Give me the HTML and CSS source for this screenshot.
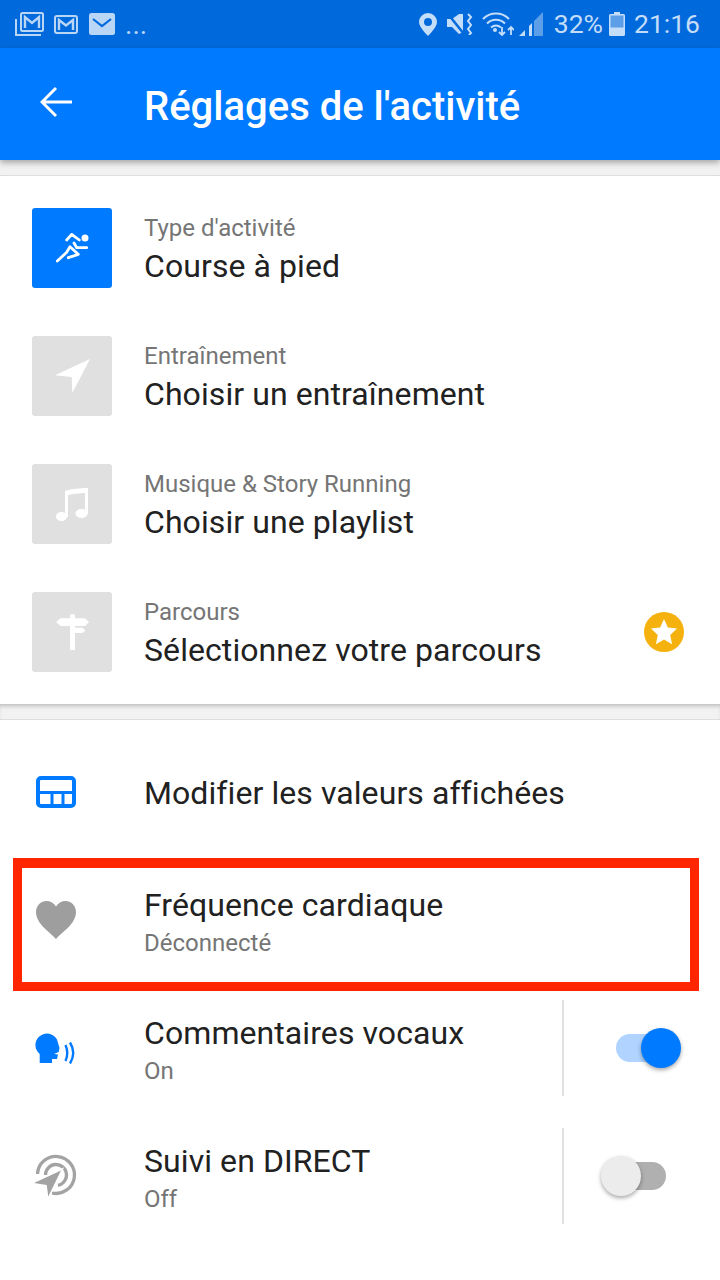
FILE: index.html
```html
<!DOCTYPE html>
<html lang="fr">
<head>
<meta charset="utf-8">
<title>Réglages de l'activité</title>
<link rel="stylesheet" href="styles.css">
</head>
<body>
<div class="status">
  <div class="status-left">
    <svg class="si" width="29" height="24" viewBox="0 0 29 24"><path d="M1 7v16h25" fill="none" stroke="#b9d6f7" stroke-width="2"/><rect x="6" y="1" width="22" height="18" rx="1.500" fill="none" stroke="#b9d6f7" stroke-width="2"/><path d="M10 16V5l7 6 7-6v11" fill="none" stroke="#b9d6f7" stroke-width="2.400"/></svg>
    <svg class="si" width="24" height="19" viewBox="0 0 24 19"><rect x="1" y="1" width="22" height="17" rx="2" fill="none" stroke="#b9d6f7" stroke-width="2"/><path d="M5 15V5l7 5.500L19 5v10" fill="none" stroke="#b9d6f7" stroke-width="2.400"/></svg>
    <svg class="si si3" width="26" height="22" viewBox="0 0 26 22"><rect width="26" height="22" rx="2.500" fill="#b9d6f7"/><path d="M4 6l9 7 9-7" fill="none" stroke="#006adc" stroke-width="2.200"/></svg>
    <span class="dots">...</span>
  </div>
  <div class="status-right">
    <svg width="18" height="23" viewBox="0 0 18 23"><path fill-rule="evenodd" d="M9 0a9 9 0 0 0-9 9c0 5.500 9 14 9 14s9-8.500 9-14a9 9 0 0 0-9-9zm0 5a4 4 0 1 1 0 8 4 4 0 0 1 0-8z" fill="#c4ddf9"/></svg>
    <svg class="mute" width="26" height="22" viewBox="0 0 26 22"><path d="M0 6h5l7-5 4 0v18l-4 2-7-7H0z" fill="#c4ddf9"/><path d="M1 1l16 20" stroke="#006adc" stroke-width="2.500"/><path d="M21 1l3 3-3 4 3 4-3 4 3 4-2 2" fill="none" stroke="#c4ddf9" stroke-width="2"/></svg>
    <svg class="wifi" width="32" height="24" viewBox="0 0 32 24"><path d="M1 7c7-7.500 19-7.500 26 0M5 11.500c5-5 13-5 18 0M9 15.500c3-2.500 7-2.500 10 0" fill="none" stroke="#c4ddf9" stroke-width="2"/><circle cx="13" cy="18" r="2" fill="#c4ddf9"/><path d="M20 15v8m-3-3l3 3 3-3M29 23v-8m-3 3l3-3 3 3" fill="none" stroke="#c4ddf9" stroke-width="1.800"/></svg>
    <svg class="signal" width="24" height="24" viewBox="0 0 24 24"><path d="M15 9L24 0v24h-9z" fill="#5c9fe8"/><path d="M0 24l6-6v6zM10 24v-10l3-3v13z" fill="#c4ddf9"/></svg>
    <span class="stat-txt pct">32%</span>
    <svg class="batt" width="16" height="24" viewBox="0 0 16 24"><path d="M5 0h6v2h3.500A1.500 1.500 0 0 1 16 3.500v19a1.500 1.500 0 0 1-1.500 1.500h-13A1.500 1.500 0 0 1 0 22.500v-19A1.500 1.500 0 0 1 1.500 2H5z" fill="#c4ddf9"/><rect x="1.500" y="3.500" width="13" height="12" fill="#5c9fe8"/></svg>
    <span class="stat-txt">21:16</span>
  </div>
</div>
<header class="bar">
  <svg class="back" width="32" height="32" viewBox="0 0 32 32"><path d="M33 16H3M16 2L2 16l14 14" fill="none" stroke="#fff" stroke-width="3"/></svg>
  <h1 class="title">Réglages de l'activité</h1>
</header>
<div class="gap"></div>
<section class="card">
  <div class="row">
    <div class="tile tile-on">
      <svg width="33" height="30" viewBox="0 0 33 30"><circle cx="29" cy="5" r="3.500" fill="#fff"/><path d="M10.700 7l5-5.700L23.300 7M1.300 28l9.400-8.700L14 13.700l8.300 7.600-10 3.400M18 10l2.700 4.700h10" fill="none" stroke="#fff" stroke-width="2.800" stroke-linecap="round" stroke-linejoin="round"/></svg>
    </div>
    <div class="text"><div class="label">Type d'activité</div><div class="value">Course à pied</div></div>
  </div>
  <div class="row">
    <div class="tile"><svg width="35" height="34" viewBox="0 0 35 34"><path d="M35 0L0 16.300 16.700 18 17.300 34z" fill="#fff"/></svg></div>
    <div class="text"><div class="label">Entraînement</div><div class="value">Choisir un entraînement</div></div>
  </div>
  <div class="row">
    <div class="tile"><svg width="32" height="34" viewBox="0 0 32 34"><path d="M9 4C14 2 24 1 32 1v26h-3V6C23 6 17 7 12 8v22H9z" fill="#fff"/><ellipse cx="5.500" cy="29.500" rx="5.500" ry="4.500" fill="#fff"/><ellipse cx="25.500" cy="26.500" rx="6" ry="4.500" fill="#fff"/></svg></div>
    <div class="text"><div class="label">Musique &amp; Story Running</div><div class="value">Choisir une playlist</div></div>
  </div>
  <div class="row">
    <div class="tile"><svg width="33" height="36" viewBox="0 0 33 36"><path d="M14 1.500a2.500 1.500 0 0 1 5 0V36h-5zM4.500 4.300h24.500L33 8l-4 4H4.500L0 8zM19 13.700h7.500l3 2.700-3 2.700H19z" fill="#fff"/></svg></div>
    <div class="text"><div class="label">Parcours</div><div class="value">Sélectionnez votre parcours</div></div>
    <svg class="premium" width="40" height="40" viewBox="0 0 40 40"><circle cx="20" cy="20" r="20" fill="#f5b20f"/><path d="M20 7l3.900 8.600 9.100 1-6.800 6.300 1.900 9.300-8.100-4.700-8.100 4.700 1.900-9.300L7 16.600l9.100-1z" fill="#fff"/></svg>
  </div>
</section>
<div class="gap gap-mid"></div>
<section class="list">
  <div class="row2">
    <svg class="ic" width="40" height="32" viewBox="0 0 40 32"><rect x="2" y="2" width="36" height="28" rx="3" fill="none" stroke="#007aff" stroke-width="4"/><path d="M2 16.500h36M16 16.500V30M27 16.500V30" stroke="#007aff" stroke-width="3"/></svg>
    <div class="text"><div class="value">Modifier les valeurs affichées</div></div>
  </div>
  <div class="row2 highlighted">
    <svg class="ic" width="40" height="38" viewBox="0 0 40 38"><path d="M20 38C14 31 0 23 0 11 0 4.500 5 0 10.500 0 14.500 0 18 2 20 5.500 22 2 25.500 0 29.500 0 35 0 40 4.500 40 11c0 12-14 20-20 27z" fill="#9e9e9e"/></svg>
    <div class="text two"><div class="value">Fréquence cardiaque</div><div class="label lab2">Déconnecté</div></div>
  </div>
  <div class="row2">
    <svg class="ic" width="40" height="30" viewBox="0 0 40 30"><path d="M3.700 30V21A11.500 11.500 0 1 1 21 6.500L23.500 15 22.700 19 18 21 22 21.600 21 26H16V30z" fill="#007aff"/><path d="M29.500 12Q33 20 29.500 28M34 9.500Q40.500 20 34 30.500" fill="none" stroke="#007aff" stroke-width="2.400"/></svg>
    <div class="text two"><div class="value">Commentaires vocaux</div><div class="label lab2">On</div></div>
    <div class="toggle-cell">
      <div class="switch switch-on"><span class="knob knob-on"></span></div>
    </div>
  </div>
  <div class="row2">
    <svg class="ic ic-live" width="42" height="42" viewBox="0 0 42 42"><path d="M3.500 19A18.500 18.500 0 1 1 18 38" fill="none" stroke="#a3a3a3" stroke-width="3.300"/><path d="M11.500 20A10.500 10.500 0 1 1 24 30.300" fill="none" stroke="#a3a3a3" stroke-width="3.300"/><path class="live-arrow" d="M27 15.500L0 28 12.700 30 14.300 41.500z"/></svg>
    <div class="text two"><div class="value">Suivi en DIRECT</div><div class="label lab2">Off</div></div>
    <div class="toggle-cell">
      <div class="switch switch-off"><span class="knob knob-off"></span></div>
    </div>
  </div>
</section>
</body>
</html>
```
FILE: styles.css
```css
* { box-sizing: border-box; }
html, body { margin: 0; padding: 0; }
body { width: 720px; height: 1280px; background: #fff; font-family: Roboto, sans-serif; overflow: hidden; color: #212121; }
.status { height: 48px; background: #006adc; display: flex; justify-content: space-between; align-items: center; padding: 0 20px 0 15px; }
.status-left { display: flex; align-items: center; gap: 10px; }
.si3 { margin-left: 1px; }
.dots { color: #b9d6f7; font-size: 28px; line-height: 28px; margin-top: 2px; }
.status-right { display: flex; align-items: center; }
.stat-txt { color: #c4ddf9; font-size: 26.500px; line-height: 48px; }
.mute { margin-left: 10px; }
.wifi { margin-left: 9px; }
.signal { margin-left: 5px; }
.pct { margin-left: 11px; }
.batt { margin-left: 6px; margin-right: 9px; }
.bar { height: 112px; background: #007aff; display: flex; align-items: center; padding-left: 40px; box-shadow: 0 3px 6px rgba(0,0,0,.3); position: relative; }
.back { flex: none; margin-top: -4px; }
.title { margin: 6px 0 0 72px; color: #fff; font-size: 40px; font-weight: 500; line-height: 48px; white-space: nowrap; }
.gap { background: #f2f2f2; border-bottom: 1px solid #dedede; height: 16px; }
.gap-mid { box-shadow: inset 0 4px 4px -2px rgba(0,0,0,.22); }
.card { background: #fff; padding: 8px 0; }
.row { height: 128px; display: flex; align-items: center; padding: 0 36px 0 32px; }
.tile { width: 80px; height: 80px; flex: none; border-radius: 3px; background: #e0e0e0; display: flex; align-items: center; justify-content: center; margin-right: 32px; }
.tile-on { background: #007aff; }
.text { flex: 1; min-width: 0; padding-top: 2px; }
.label { color: #757575; font-size: 24px; line-height: 32px; margin-bottom: 2px; }
.value { color: #212121; font-size: 32px; line-height: 40px; letter-spacing: .08px; }
.two { padding-top: 6px; }
.lab2 { line-height: 36px; margin-bottom: 0; }
.premium { flex: none; }
.list { padding-top: 8px; }
.row2 { height: 128px; display: flex; align-items: center; padding-left: 36px; }
.ic { flex: none; width: 40px; margin-right: 68px; overflow: visible; }
.ic-live { width: 42px; margin-left: -2px; }
.live-arrow { fill: #a3a3a3; stroke: #fff; stroke-width: 3px; paint-order: stroke; }
.highlighted { position: relative; }
.highlighted::after { content: ""; box-sizing: border-box; position: absolute; left: 13px; top: 2px; width: 686px; height: 133px; border: 9px solid #ff2600; border-top-width: 10px; pointer-events: none; }
.toggle-cell { width: 158px; height: 96px; border-left: 2px solid #e0e0e0; display: flex; align-items: center; justify-content: center; padding-right: 2px; flex: none; }
.switch { position: relative; width: 50px; height: 28px; border-radius: 14px; }
.switch-on { background: #b0d4ff; }
.switch-off { background: #b0b0b0; }
.knob { position: absolute; top: -6px; width: 40px; height: 40px; border-radius: 50%; box-shadow: 0 2px 4px rgba(0,0,0,.35); }
.knob-on { right: -15px; background: #007aff; }
.knob-off { left: -15px; background: #ececec; }
```
